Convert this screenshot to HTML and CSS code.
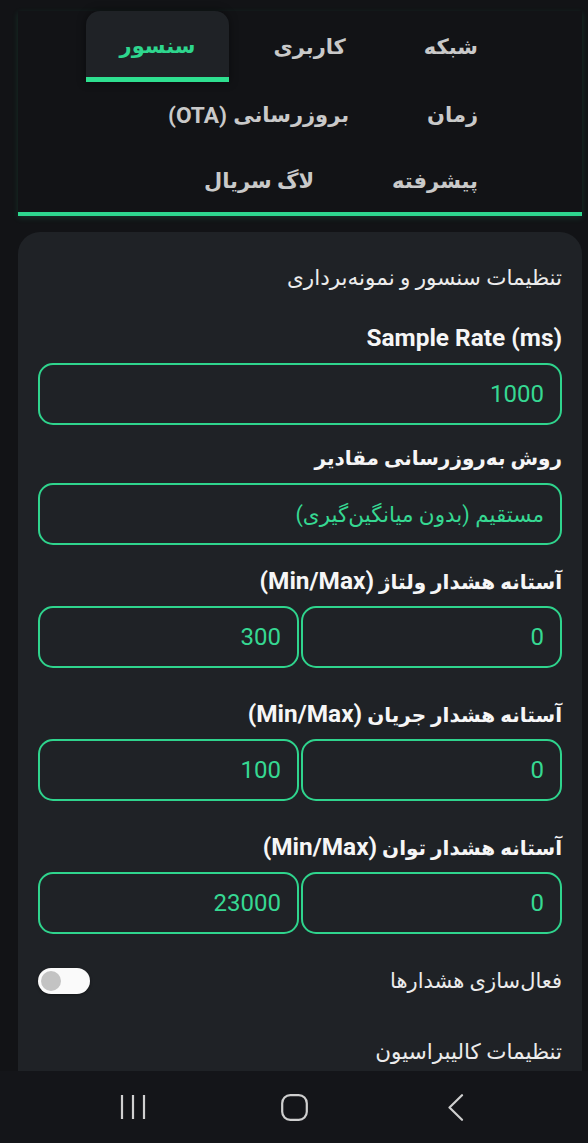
FILE: index.html
```html
<!DOCTYPE html>
<html lang="fa" dir="rtl">
<head>
<meta charset="utf-8">
<title>تنظیمات سنسور</title>
<link rel="stylesheet" href="styles.css">
</head>
<body>
<div class="app">
  <main class="content">
    <nav class="tabs-wrap">
      <div class="tabs">
        <button class="tab">شبکه</button>
        <button class="tab">کاربری</button>
        <button class="tab active">سنسور</button>
        <button class="tab">زمان</button>
        <button class="tab">بروزرسانی <span class="en">(OTA)</span></button>
        <button class="tab">پیشرفته</button>
        <button class="tab">لاگ سریال</button>
      </div>
    </nav>

    <section class="card">
      <h2 class="card-title">تنظیمات سنسور و نمونه‌برداری</h2>

      <div class="field first">
        <label class="label"><bdi class="en">Sample Rate (ms)</bdi></label>
        <input class="input" type="text" value="1000">
      </div>

      <div class="field">
        <label class="label">روش به‌روزرسانی مقادیر</label>
        <div class="input select">مستقیم (بدون میانگین‌گیری)</div>
      </div>

      <div class="field pair">
        <label class="label">آستانه هشدار ولتاژ <span class="en">(Min/Max)</span></label>
        <div class="pair-row">
          <input class="input" type="text" value="0">
          <input class="input" type="text" value="300">
        </div>
      </div>

      <div class="field pair">
        <label class="label">آستانه هشدار جریان <span class="en">(Min/Max)</span></label>
        <div class="pair-row">
          <input class="input" type="text" value="0">
          <input class="input" type="text" value="100">
        </div>
      </div>

      <div class="field pair">
        <label class="label">آستانه هشدار توان <span class="en">(Min/Max)</span></label>
        <div class="pair-row">
          <input class="input" type="text" value="0">
          <input class="input" type="text" value="23000">
        </div>
      </div>

      <div class="toggle-row">
        <span class="toggle-label">فعال‌سازی هشدارها</span>
        <span class="switch"><span class="knob"></span></span>
      </div>

      <h2 class="card-title calib">تنظیمات کالیبراسیون</h2>
    </section>
  </main>

  <footer class="sysnav">
    <span class="navbtn">
      <svg width="26" height="26" viewBox="0 0 26 26"><path d="M2 1v24M13 1v24M24 1v24" fill="none" stroke="#cfcfcf" stroke-width="2.2"/></svg>
    </span>
    <span class="navbtn">
      <svg width="27" height="27" viewBox="0 0 27 27"><rect x="1.2" y="1.2" width="24.6" height="24.6" rx="8" fill="none" stroke="#cfcfcf" stroke-width="2.2"/></svg>
    </span>
    <span class="navbtn">
      <svg width="17" height="27" viewBox="0 0 17 27"><path d="M15 1.2 L2.5 13.5 L15 25.8" fill="none" stroke="#cfcfcf" stroke-width="2.2" stroke-linecap="round" stroke-linejoin="round"/></svg>
    </span>
  </footer>
</div>
</body>
</html>
```

FILE: styles.css
```css
html, body {
  margin: 0;
  padding: 0;
  height: 100%;
}

body {
  background: #121316;
  color: #f1f1f1;
  font-family: Roboto, "DejaVu Sans", sans-serif;
  overflow: hidden;
}

.app {
  height: 100vh;
  display: flex;
  flex-direction: column;
}

.content {
  flex: 1;
  min-height: 0;
  overflow: hidden;
  padding: 11px 6px 0 18px;
}

.en {
  font-size: 1.22em;
}

/* Tabs */
.tabs-wrap {
  border-bottom: 4px solid #2ed68e;
  box-shadow: 0 2px 6px rgba(46, 214, 142, 0.15);
}

.tabs {
  display: flex;
  flex-wrap: wrap;
  align-items: center;
  gap: 0 10px;
  padding: 0 70px 0 40px;
  margin-bottom: -2px;
}

.tab {
  box-sizing: border-box;
  height: 66px;
  padding: 0 34px;
  border: 0;
  background: none;
  color: #c9c9c9;
  font-family: Roboto, "DejaVu Sans", sans-serif;
  font-size: 21px;
  font-weight: bold;
  display: flex;
  align-items: center;
  gap: 0.3em;
  white-space: nowrap;
}

.tab .en {
  font-size: 1.08em;
}

.tab.active {
  height: 71px;
  padding-top: 4px;
  color: #2ed68e;
  background: #1f2226;
  border-bottom: 5px solid #2ee090;
  border-radius: 14px 14px 0 0;
  box-shadow: 0 0 10px rgba(0, 0, 0, 0.45);
}

/* Card */
.card {
  margin-top: 16px;
  background: #1f2226;
  border-radius: 22px 22px 0 0;
  padding: 32px 20px 30px;
  min-height: 900px;
}

.card-title {
  height: 28px;
  margin: 0 0 32px;
  font-size: 21.5px;
  font-weight: normal;
  line-height: 28px;
  color: #ececec;
}

.card-title.calib {
  margin: 42px 0 20px;
}

.field {
  margin-bottom: 22px;
}

.field.first {
  margin-bottom: 19px;
}

.field.pair {
  margin-bottom: 32px;
}

.label {
  display: block;
  height: 28px;
  font-size: 20px;
  font-weight: bold;
  line-height: 28px;
  margin-bottom: 11px;
  color: #f6f6f6;
}

.input {
  display: block;
  box-sizing: border-box;
  width: 100%;
  height: 62px;
  margin: 0;
  border: 2.5px solid #2fd48d;
  border-radius: 15px;
  background: transparent;
  color: #36d892;
  font-family: Roboto, "DejaVu Sans", sans-serif;
  font-size: 24px;
  padding: 0 16px;
  text-align: right;
  direction: rtl;
  outline: none;
}

.select {
  display: flex;
  align-items: center;
  font-size: 21.5px;
}

.pair-row {
  display: flex;
  gap: 2px;
}

.pair-row .input {
  flex: 1;
  min-width: 0;
}

/* Toggle */
.toggle-row {
  display: flex;
  justify-content: space-between;
  align-items: center;
  height: 30px;
}

.toggle-label {
  font-size: 21px;
  line-height: 30px;
  color: #ececec;
}

.switch {
  direction: ltr;
  display: flex;
  align-items: center;
  box-sizing: border-box;
  width: 52px;
  height: 26px;
  padding: 0 3px;
  border-radius: 13px;
  background: #fafafa;
  box-shadow: 0 1px 3px rgba(0, 0, 0, 0.4);
}

.knob {
  width: 20px;
  height: 20px;
  border-radius: 50%;
  background: #c3c3c3;
}

/* System navigation bar */
.sysnav {
  flex: 0 0 72px;
  background: #141519;
  direction: ltr;
  display: flex;
  justify-content: center;
  align-items: center;
}

.navbtn {
  width: 161px;
  display: flex;
  justify-content: center;
  align-items: center;
}
```
